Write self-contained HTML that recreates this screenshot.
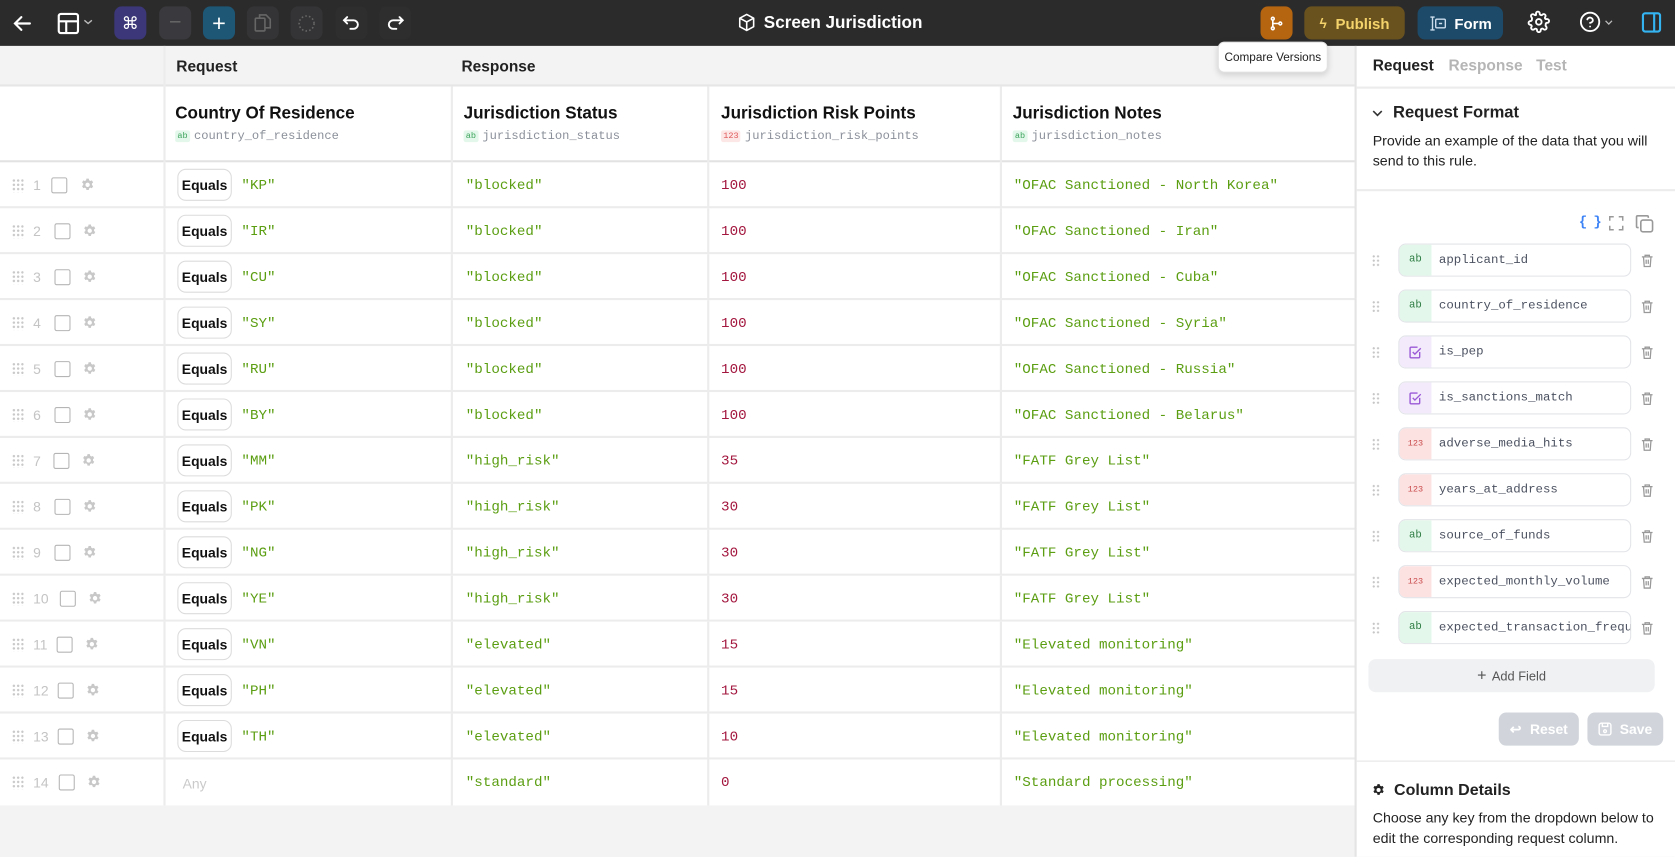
<!DOCTYPE html>
<html><head><meta charset="utf-8"><style>
*{box-sizing:border-box;margin:0;padding:0}
html,body{width:1675px;height:856px;overflow:hidden;background:#f3f3f3}
#w{position:absolute;left:0;top:0;width:1568px;height:802px;transform:scale(1.06824);transform-origin:0 0;font-family:"Liberation Sans",sans-serif;color:#111}
.a{position:absolute}
.top{left:0;top:0;width:1568px;height:43px;background:#2b2b2b}
.tb{position:absolute;top:6px;width:30px;height:31px;border-radius:7px;display:flex;align-items:center;justify-content:center}
.mono{font-family:"Liberation Mono",monospace}
.row{position:absolute;left:0;width:1268px;height:43px;background:#fff;border-bottom:2px solid #ececec}
.g{color:#5b9e12;font-size:13.3px}
.r{color:#a3173f;font-size:13.3px}
.eq{position:absolute;left:166px;top:6px;width:51px;height:30px;border:1px solid #dcdcdc;border-radius:8px;font-size:13px;font-weight:bold;display:flex;align-items:center;justify-content:center}
.num{position:absolute;left:31px;top:14px;font-size:13px;color:#c4c4c4}
.cb{position:absolute;top:14px;width:15px;height:15px;border:1.5px solid #b5b5b5;border-radius:2px}
.dots{position:absolute;left:11px;top:15px;width:11px;height:13px;background-image:radial-gradient(circle,#c9c9c9 1px,transparent 1.2px);background-size:4px 4px}
.gear{position:absolute;top:14px;width:14px;height:14px}
.cell{position:absolute;top:14px}
.vl{position:absolute;top:0;width:2px;height:43px;background:#ececec}
.hd{position:absolute;top:98px;font-size:16px;font-weight:bold}
.sub{position:absolute;top:122px;font-size:11.3px;color:#8a8f99}
.bd{display:inline-block;font-size:8px;padding:1px 2px;border-radius:2px;margin-right:4px;vertical-align:1px}
.fld{position:absolute;left:1309px;width:218px;height:31px;border:1px solid #e2e4e8;border-radius:7px;background:#fff;overflow:hidden}
.fb{position:absolute;left:0;top:0;width:30px;height:29px;display:flex;align-items:center;justify-content:center;font-size:10px}
.ft{position:absolute;left:37px;top:8px;font-size:11.6px;color:#4b5160;white-space:nowrap}
.fd{position:absolute;left:1284px;width:8px;height:12px;background-image:radial-gradient(circle,#c5c5c5 0.9px,transparent 1.1px);background-size:4px 4px}
.tr{position:absolute;left:1535px;width:14px;height:14px}
</style></head><body><div id="w">
<div class="a top"></div>
<svg class="a" style="left:11px;top:12px" width="20" height="20" viewBox="0 0 20 20" fill="none" stroke="#fff" stroke-width="2" stroke-linecap="round"><path d="M17 10H3M9 4L3 10l6 6"/></svg>
<svg class="a" style="left:53px;top:11px" width="22" height="22" viewBox="0 0 22 22" fill="none" stroke="#fff" stroke-width="2"><rect x="2" y="2" width="18" height="18" rx="2"/><path d="M2 9h18M9 9v11"/></svg>
<svg class="a" style="left:78px;top:17px" width="9" height="7" viewBox="0 0 9 7" fill="none" stroke="#bbb" stroke-width="1.3"><path d="M1 2l3.5 3L8 2"/></svg>
<div class="tb" style="left:107px;background:#3b3778;color:#fff;font-size:16px">⌘</div>
<div class="tb" style="left:149px;background:#3a3a3e;color:#666;font-size:20px">−</div>
<div class="tb" style="left:190px;background:#1d5775;color:#fff;font-size:22px">+</div>
<div class="tb" style="left:231px;background:#343436"><svg width="16" height="18" viewBox="0 0 16 18" fill="none" stroke="#666" stroke-width="1.5"><rect x="1" y="4" width="9" height="12" rx="1"/><path d="M5 4V1h6l4 4v8h-5"/></svg></div>
<div class="tb" style="left:272px;background:#343436"><svg width="18" height="18" viewBox="0 0 18 18" fill="none" stroke="#666" stroke-width="1.5" stroke-dasharray="1.5 2"><circle cx="9" cy="9" r="7"/></svg></div>
<div class="tb" style="left:314px;background:#2e2e2e"><svg width="18" height="16" viewBox="0 0 18 16" fill="none" stroke="#fff" stroke-width="1.8" stroke-linecap="round"><path d="M5 2L2 5l3 3M2 5h9a4 4 0 010 8H8"/></svg></div>
<div class="tb" style="left:355px;background:#2e2e2e"><svg width="18" height="16" viewBox="0 0 18 16" fill="none" stroke="#fff" stroke-width="1.8" stroke-linecap="round"><path d="M13 2l3 3-3 3M16 5H7a4 4 0 000 8h3"/></svg></div>
<svg class="a" style="left:690px;top:12px" width="18" height="18" viewBox="0 0 18 18" fill="none" stroke="#fff" stroke-width="1.5" stroke-linejoin="round"><path d="M9 1.5l6.5 3.5v8L9 16.5 2.5 13V5z M2.5 5L9 8.5 15.5 5M9 8.5v8"/></svg>
<div class="a" style="left:715px;top:13px;color:#fff;font-size:16px;font-weight:bold">Screen Jurisdiction</div>
<div class="tb" style="left:1180px;background:#b5640f"><svg width="14" height="14" viewBox="0 0 14 14" fill="none" stroke="#fff" stroke-width="1.5"><circle cx="3.5" cy="2.5" r="1.3"/><circle cx="3.5" cy="11.5" r="1.3"/><circle cx="10.5" cy="7" r="1.3"/><path d="M3.5 4v6M3.5 7h5.5"/></svg></div>
<div class="tb" style="left:1221px;width:94px;background:#6a521f;color:#f4d36b;font-size:14px;font-weight:bold"><span style="font-size:13px;margin-right:8px">ϟ</span>Publish</div>
<div class="tb" style="left:1327px;width:80px;background:#1c4a68;color:#fff;font-size:14px;font-weight:bold"><svg width="16" height="14" viewBox="0 0 16 14" fill="none" stroke="#cde" stroke-width="1.3" style="margin-right:8px"><path d="M3 1v12M1 1h4M1 13h4"/><rect x="6" y="3" width="9" height="8" rx="1"/><path d="M9 7h3"/></svg>Form</div>
<svg class="a" style="left:1430px;top:10px" width="21" height="21" viewBox="0 0 24 24" fill="none" stroke="#fff" stroke-width="2"><circle cx="12" cy="12" r="3"/><path d="M19.4 15a1.65 1.65 0 00.33 1.820l.06.06a2 2 0 11-2.83 2.830l-.06-.06a1.65 1.65 0 00-2.82 1.170V21a2 2 0 01-4 0v-.09a1.65 1.65 0 00-2.82-1.170l-.06.06a2 2 0 11-2.83-2.830l.06-.06A1.65 1.65 0 003 15.1H3a2 2 0 010-4h.09A1.65 1.65 0 004.6 9a1.65 1.65 0 00-.33-1.820l-.06-.06a2 2 0 112.83-2.830l.06.06A1.65 1.65 0 009 4.6V3a2 2 0 014 0v.09a1.65 1.65 0 002.82 1.170l.06-.06a2 2 0 112.83 2.830l-.06.06A1.65 1.65 0 0019.4 9H21a2 2 0 010 4h-.09a1.65 1.65 0 00-1.51 1z"/></svg>
<svg class="a" style="left:1478px;top:10px" width="21" height="21" viewBox="0 0 22 22" fill="none" stroke="#fff" stroke-width="1.8" stroke-linecap="round"><circle cx="11" cy="11" r="9"/><path d="M8.3 8.5a2.8 2.8 0 015.4 1c0 1.8-2.7 2.5-2.7 2.5M11 15.5h.01"/></svg>
<svg class="a" style="left:1502px;top:18px" width="8" height="6" viewBox="0 0 8 6" fill="none" stroke="#bbb" stroke-width="1.2"><path d="M1 1.5l3 3 3-3"/></svg>
<svg class="a" style="left:1536px;top:11px" width="20" height="20" viewBox="0 0 20 20" fill="none" stroke="#35b4f2" stroke-width="2"><rect x="2" y="1.5" width="16" height="17" rx="2"/><path d="M12.5 1.5v17"/></svg>

<div class="a" style="left:0;top:43px;width:1268px;height:38px;background:#f3f3f3;border-bottom:2px solid #e6e6e6"></div>
<div class="a" style="left:153px;top:43px;width:2px;height:711px;background:#ececec"></div>
<div class="a" style="left:165px;top:55px;font-size:14.5px;font-weight:bold;color:#222">Request</div>
<div class="a" style="left:432px;top:55px;font-size:14.5px;font-weight:bold;color:#222">Response</div>
<div class="a" style="left:0;top:81px;width:1268px;height:71px;background:#fff;border-bottom:2px solid #e2e2e2"></div>
<div class="a" style="left:153px;top:81px;width:2px;height:71px;background:#ececec"></div>
<div class="a" style="left:422px;top:81px;width:2px;height:71px;background:#ececec"></div>
<div class="a" style="left:662px;top:81px;width:2px;height:71px;background:#ececec"></div>
<div class="a" style="left:936px;top:81px;width:2px;height:71px;background:#ececec"></div>
<div class="hd" style="left:164px">Country Of Residence</div>
<div class="hd" style="left:434px">Jurisdiction Status</div>
<div class="hd" style="left:675px">Jurisdiction Risk Points</div>
<div class="hd" style="left:948px">Jurisdiction Notes</div>
<div class="sub mono" style="left:164px"><span class="bd" style="background:#e3f8ea;color:#3ca35c">ab</span>country_of_residence</div>
<div class="sub mono" style="left:434px"><span class="bd" style="background:#e3f8ea;color:#3ca35c">ab</span>jurisdiction_status</div>
<div class="sub mono" style="left:675px"><span class="bd" style="background:#fde6e6;color:#e05a5a">123</span>jurisdiction_risk_points</div>
<div class="sub mono" style="left:948px"><span class="bd" style="background:#e3f8ea;color:#3ca35c">ab</span>jurisdiction_notes</div>

<svg width="0" height="0" style="position:absolute"><defs><symbol id="gr" viewBox="0 0 24 24"><path fill="#c8c8c8" d="M13.9 2l.5 2.6a8 8 0 012 1.2l2.5-.9 2 3.4-2 1.7a8 8 0 010 2.4l2 1.7-2 3.4-2.5-.9a8 8 0 01-2 1.2l-.5 2.6h-3.8l-.5-2.6a8 8 0 01-2-1.2l-2.5.9-2-3.4 2-1.7a8 8 0 010-2.4l-2-1.7 2-3.4 2.5.9a8 8 0 012-1.2l.5-2.6zM12 8.5a3.5 3.5 0 100 7 3.5 3.5 0 000-7z"/></symbol></defs></svg>

<div class="row" style="top:152px"><div class="dots"></div><div class="num">1</div><div class="cb" style="left:48px"></div><svg class="gear" style="left:75px"><use href="#gr"/></svg><div class="vl" style="left:153px"></div><div class="vl" style="left:422px"></div><div class="vl" style="left:662px"></div><div class="vl" style="left:936px"></div><div class="eq">Equals</div><div class="cell mono g" style="left:226px">"KP"</div><div class="cell mono g" style="left:436px">"blocked"</div><div class="cell mono r" style="left:675px">100</div><div class="cell mono g" style="left:949px">"OFAC Sanctioned - North Korea"</div></div>
<div class="row" style="top:195px"><div class="dots"></div><div class="num">2</div><div class="cb" style="left:51px"></div><svg class="gear" style="left:77px"><use href="#gr"/></svg><div class="vl" style="left:153px"></div><div class="vl" style="left:422px"></div><div class="vl" style="left:662px"></div><div class="vl" style="left:936px"></div><div class="eq">Equals</div><div class="cell mono g" style="left:226px">"IR"</div><div class="cell mono g" style="left:436px">"blocked"</div><div class="cell mono r" style="left:675px">100</div><div class="cell mono g" style="left:949px">"OFAC Sanctioned - Iran"</div></div>
<div class="row" style="top:238px"><div class="dots"></div><div class="num">3</div><div class="cb" style="left:51px"></div><svg class="gear" style="left:77px"><use href="#gr"/></svg><div class="vl" style="left:153px"></div><div class="vl" style="left:422px"></div><div class="vl" style="left:662px"></div><div class="vl" style="left:936px"></div><div class="eq">Equals</div><div class="cell mono g" style="left:226px">"CU"</div><div class="cell mono g" style="left:436px">"blocked"</div><div class="cell mono r" style="left:675px">100</div><div class="cell mono g" style="left:949px">"OFAC Sanctioned - Cuba"</div></div>
<div class="row" style="top:281px"><div class="dots"></div><div class="num">4</div><div class="cb" style="left:51px"></div><svg class="gear" style="left:77px"><use href="#gr"/></svg><div class="vl" style="left:153px"></div><div class="vl" style="left:422px"></div><div class="vl" style="left:662px"></div><div class="vl" style="left:936px"></div><div class="eq">Equals</div><div class="cell mono g" style="left:226px">"SY"</div><div class="cell mono g" style="left:436px">"blocked"</div><div class="cell mono r" style="left:675px">100</div><div class="cell mono g" style="left:949px">"OFAC Sanctioned - Syria"</div></div>
<div class="row" style="top:324px"><div class="dots"></div><div class="num">5</div><div class="cb" style="left:51px"></div><svg class="gear" style="left:77px"><use href="#gr"/></svg><div class="vl" style="left:153px"></div><div class="vl" style="left:422px"></div><div class="vl" style="left:662px"></div><div class="vl" style="left:936px"></div><div class="eq">Equals</div><div class="cell mono g" style="left:226px">"RU"</div><div class="cell mono g" style="left:436px">"blocked"</div><div class="cell mono r" style="left:675px">100</div><div class="cell mono g" style="left:949px">"OFAC Sanctioned - Russia"</div></div>
<div class="row" style="top:367px"><div class="dots"></div><div class="num">6</div><div class="cb" style="left:51px"></div><svg class="gear" style="left:77px"><use href="#gr"/></svg><div class="vl" style="left:153px"></div><div class="vl" style="left:422px"></div><div class="vl" style="left:662px"></div><div class="vl" style="left:936px"></div><div class="eq">Equals</div><div class="cell mono g" style="left:226px">"BY"</div><div class="cell mono g" style="left:436px">"blocked"</div><div class="cell mono r" style="left:675px">100</div><div class="cell mono g" style="left:949px">"OFAC Sanctioned - Belarus"</div></div>
<div class="row" style="top:410px"><div class="dots"></div><div class="num">7</div><div class="cb" style="left:50px"></div><svg class="gear" style="left:76px"><use href="#gr"/></svg><div class="vl" style="left:153px"></div><div class="vl" style="left:422px"></div><div class="vl" style="left:662px"></div><div class="vl" style="left:936px"></div><div class="eq">Equals</div><div class="cell mono g" style="left:226px">"MM"</div><div class="cell mono g" style="left:436px">"high_risk"</div><div class="cell mono r" style="left:675px">35</div><div class="cell mono g" style="left:949px">"FATF Grey List"</div></div>
<div class="row" style="top:453px"><div class="dots"></div><div class="num">8</div><div class="cb" style="left:51px"></div><svg class="gear" style="left:77px"><use href="#gr"/></svg><div class="vl" style="left:153px"></div><div class="vl" style="left:422px"></div><div class="vl" style="left:662px"></div><div class="vl" style="left:936px"></div><div class="eq">Equals</div><div class="cell mono g" style="left:226px">"PK"</div><div class="cell mono g" style="left:436px">"high_risk"</div><div class="cell mono r" style="left:675px">30</div><div class="cell mono g" style="left:949px">"FATF Grey List"</div></div>
<div class="row" style="top:496px"><div class="dots"></div><div class="num">9</div><div class="cb" style="left:51px"></div><svg class="gear" style="left:77px"><use href="#gr"/></svg><div class="vl" style="left:153px"></div><div class="vl" style="left:422px"></div><div class="vl" style="left:662px"></div><div class="vl" style="left:936px"></div><div class="eq">Equals</div><div class="cell mono g" style="left:226px">"NG"</div><div class="cell mono g" style="left:436px">"high_risk"</div><div class="cell mono r" style="left:675px">30</div><div class="cell mono g" style="left:949px">"FATF Grey List"</div></div>
<div class="row" style="top:539px"><div class="dots"></div><div class="num">10</div><div class="cb" style="left:56px"></div><svg class="gear" style="left:82px"><use href="#gr"/></svg><div class="vl" style="left:153px"></div><div class="vl" style="left:422px"></div><div class="vl" style="left:662px"></div><div class="vl" style="left:936px"></div><div class="eq">Equals</div><div class="cell mono g" style="left:226px">"YE"</div><div class="cell mono g" style="left:436px">"high_risk"</div><div class="cell mono r" style="left:675px">30</div><div class="cell mono g" style="left:949px">"FATF Grey List"</div></div>
<div class="row" style="top:582px"><div class="dots"></div><div class="num">11</div><div class="cb" style="left:53px"></div><svg class="gear" style="left:79px"><use href="#gr"/></svg><div class="vl" style="left:153px"></div><div class="vl" style="left:422px"></div><div class="vl" style="left:662px"></div><div class="vl" style="left:936px"></div><div class="eq">Equals</div><div class="cell mono g" style="left:226px">"VN"</div><div class="cell mono g" style="left:436px">"elevated"</div><div class="cell mono r" style="left:675px">15</div><div class="cell mono g" style="left:949px">"Elevated monitoring"</div></div>
<div class="row" style="top:625px"><div class="dots"></div><div class="num">12</div><div class="cb" style="left:54px"></div><svg class="gear" style="left:80px"><use href="#gr"/></svg><div class="vl" style="left:153px"></div><div class="vl" style="left:422px"></div><div class="vl" style="left:662px"></div><div class="vl" style="left:936px"></div><div class="eq">Equals</div><div class="cell mono g" style="left:226px">"PH"</div><div class="cell mono g" style="left:436px">"elevated"</div><div class="cell mono r" style="left:675px">15</div><div class="cell mono g" style="left:949px">"Elevated monitoring"</div></div>
<div class="row" style="top:668px"><div class="dots"></div><div class="num">13</div><div class="cb" style="left:54px"></div><svg class="gear" style="left:80px"><use href="#gr"/></svg><div class="vl" style="left:153px"></div><div class="vl" style="left:422px"></div><div class="vl" style="left:662px"></div><div class="vl" style="left:936px"></div><div class="eq">Equals</div><div class="cell mono g" style="left:226px">"TH"</div><div class="cell mono g" style="left:436px">"elevated"</div><div class="cell mono r" style="left:675px">10</div><div class="cell mono g" style="left:949px">"Elevated monitoring"</div></div>
<div class="row" style="top:711px;border-bottom:none"><div class="dots"></div><div class="num">14</div><div class="cb" style="left:55px"></div><svg class="gear" style="left:81px"><use href="#gr"/></svg><div class="vl" style="left:153px"></div><div class="vl" style="left:422px"></div><div class="vl" style="left:662px"></div><div class="vl" style="left:936px"></div><div class="cell" style="left:171px;font-size:13px;color:#cacaca;top:15px">Any</div><div class="cell mono g" style="left:436px">"standard"</div><div class="cell mono r" style="left:675px">0</div><div class="cell mono g" style="left:949px">"Standard processing"</div></div>

<div class="a" style="left:1268px;top:43px;width:300px;height:759px;background:#fff;border-left:2px solid #e4e4e4"></div>
<div class="a" style="left:1285px;top:54px;font-size:14.5px;font-weight:bold;color:#222">Request</div>
<div class="a" style="left:1356px;top:54px;font-size:14.5px;font-weight:bold;color:#b5b5b5">Response</div>
<div class="a" style="left:1438px;top:54px;font-size:14.5px;font-weight:bold;color:#b5b5b5">Test</div>
<div class="a" style="left:1270px;top:81px;width:298px;height:2px;background:#ececec"></div>
<svg class="a" style="left:1284px;top:102px" width="11" height="8" viewBox="0 0 11 8" fill="none" stroke="#333" stroke-width="1.5"><path d="M1.5 2l4 4 4-4"/></svg>
<div class="a" style="left:1304px;top:97px;font-size:15.5px;font-weight:bold;color:#222">Request Format</div>
<div class="a" style="left:1285px;top:122px;font-size:13.3px;line-height:19px;color:#222;width:280px">Provide an example of the data that you will send to this rule.</div>
<div class="a" style="left:1270px;top:177px;width:298px;height:2px;background:#ececec"></div>
<div class="a mono" style="left:1478px;top:200px;font-size:13px;color:#3b82f6;font-weight:bold;letter-spacing:-1px">{ }</div>
<svg class="a" style="left:1506px;top:202px" width="14" height="14" viewBox="0 0 15 15" fill="none" stroke="#999" stroke-width="1.5"><path d="M1 5V1h4M10 1h4v4M14 10v4h-4M5 14H1v-4"/></svg>
<svg class="a" style="left:1531px;top:201px" width="17" height="17" viewBox="0 0 17 17" fill="none" stroke="#999" stroke-width="1.5"><rect x="5" y="5" width="11" height="11" rx="2"/><path d="M3 12H2a1 1 0 01-1-1V2a1 1 0 011-1h9a1 1 0 011 1v1"/></svg>

<div class="fd" style="top:238px"></div><div class="fld" style="top:228px"><div class="fb mono" style="background:#e3f8ea;color:#2f7d45">ab</div><div class="ft mono">applicant_id</div></div>
<div class="fd" style="top:281px"></div><div class="fld" style="top:271px"><div class="fb mono" style="background:#e3f8ea;color:#2f7d45">ab</div><div class="ft mono">country_of_residence</div></div>
<div class="fd" style="top:324px"></div><div class="fld" style="top:314px"><div class="fb" style="background:#f3ebfc"><svg width="12" height="12" viewBox="0 0 12 12" fill="none" stroke="#9b59d6" stroke-width="1.3"><path d="M10 5.5V10a1 1 0 01-1 1H2a1 1 0 01-1-1V2a1 1 0 011-1h6"/><path d="M3.5 5.5l2 2L11 2"/></svg></div><div class="ft mono">is_pep</div></div>
<div class="fd" style="top:367px"></div><div class="fld" style="top:357px"><div class="fb" style="background:#f3ebfc"><svg width="12" height="12" viewBox="0 0 12 12" fill="none" stroke="#9b59d6" stroke-width="1.3"><path d="M10 5.5V10a1 1 0 01-1 1H2a1 1 0 01-1-1V2a1 1 0 011-1h6"/><path d="M3.5 5.5l2 2L11 2"/></svg></div><div class="ft mono">is_sanctions_match</div></div>
<div class="fd" style="top:410px"></div><div class="fld" style="top:400px"><div class="fb mono" style="background:#fde2e2;color:#c94a4a;font-size:8px">123</div><div class="ft mono">adverse_media_hits</div></div>
<div class="fd" style="top:453px"></div><div class="fld" style="top:443px"><div class="fb mono" style="background:#fde2e2;color:#c94a4a;font-size:8px">123</div><div class="ft mono">years_at_address</div></div>
<div class="fd" style="top:496px"></div><div class="fld" style="top:486px"><div class="fb mono" style="background:#e3f8ea;color:#2f7d45">ab</div><div class="ft mono">source_of_funds</div></div>
<div class="fd" style="top:539px"></div><div class="fld" style="top:529px"><div class="fb mono" style="background:#fde2e2;color:#c94a4a;font-size:8px">123</div><div class="ft mono">expected_monthly_volume</div></div>
<div class="fd" style="top:582px"></div><div class="fld" style="top:572px"><div class="fb mono" style="background:#e3f8ea;color:#2f7d45">ab</div><div class="ft mono">expected_transaction_frequ</div></div>
<svg class="tr" style="top:237px" viewBox="0 0 14 14" fill="none" stroke="#999" stroke-width="1.2"><path d="M2 3.5h10M5 3.5V2h4v1.5M3.5 3.5l.7 9h5.6l.7-9M6 6v4M8 6v4"/></svg>
<svg class="tr" style="top:280px" viewBox="0 0 14 14" fill="none" stroke="#999" stroke-width="1.2"><path d="M2 3.5h10M5 3.5V2h4v1.5M3.5 3.5l.7 9h5.6l.7-9M6 6v4M8 6v4"/></svg>
<svg class="tr" style="top:323px" viewBox="0 0 14 14" fill="none" stroke="#999" stroke-width="1.2"><path d="M2 3.5h10M5 3.5V2h4v1.5M3.5 3.5l.7 9h5.6l.7-9M6 6v4M8 6v4"/></svg>
<svg class="tr" style="top:366px" viewBox="0 0 14 14" fill="none" stroke="#999" stroke-width="1.2"><path d="M2 3.5h10M5 3.5V2h4v1.5M3.5 3.5l.7 9h5.6l.7-9M6 6v4M8 6v4"/></svg>
<svg class="tr" style="top:409px" viewBox="0 0 14 14" fill="none" stroke="#999" stroke-width="1.2"><path d="M2 3.5h10M5 3.5V2h4v1.5M3.5 3.5l.7 9h5.6l.7-9M6 6v4M8 6v4"/></svg>
<svg class="tr" style="top:452px" viewBox="0 0 14 14" fill="none" stroke="#999" stroke-width="1.2"><path d="M2 3.5h10M5 3.5V2h4v1.5M3.5 3.5l.7 9h5.6l.7-9M6 6v4M8 6v4"/></svg>
<svg class="tr" style="top:495px" viewBox="0 0 14 14" fill="none" stroke="#999" stroke-width="1.2"><path d="M2 3.5h10M5 3.5V2h4v1.5M3.5 3.5l.7 9h5.6l.7-9M6 6v4M8 6v4"/></svg>
<svg class="tr" style="top:538px" viewBox="0 0 14 14" fill="none" stroke="#999" stroke-width="1.2"><path d="M2 3.5h10M5 3.5V2h4v1.5M3.5 3.5l.7 9h5.6l.7-9M6 6v4M8 6v4"/></svg>
<svg class="tr" style="top:581px" viewBox="0 0 14 14" fill="none" stroke="#999" stroke-width="1.2"><path d="M2 3.5h10M5 3.5V2h4v1.5M3.5 3.5l.7 9h5.6l.7-9M6 6v4M8 6v4"/></svg>

<div class="a" style="left:1281px;top:617px;width:268px;height:31px;background:#f0f1f3;border-radius:7px;font-size:12px;color:#555;display:flex;align-items:center;justify-content:center"><span style="font-size:15px;margin-right:5px">+</span>Add Field</div>
<div class="a" style="left:1403px;top:667px;width:75px;height:31px;background:#d1d5db;border-radius:7px;color:#fff;font-size:13px;font-weight:bold;display:flex;align-items:center;justify-content:center"><span style="margin-right:8px">↩</span>Reset</div>
<div class="a" style="left:1486px;top:667px;width:71px;height:31px;background:#d1d5db;border-radius:7px;color:#fff;font-size:13px;font-weight:bold;display:flex;align-items:center;justify-content:center"><svg width="13" height="13" viewBox="0 0 13 13" fill="none" stroke="#fff" stroke-width="1.3" style="margin-right:7px"><rect x="1" y="1" width="11" height="11" rx="2"/><path d="M4 1v3h5V1"/><circle cx="6.5" cy="8.5" r="1.3"/></svg>Save</div>
<div class="a" style="left:1270px;top:712px;width:298px;height:1px;background:#e6e6e6"></div>
<svg class="a" style="left:1284px;top:733px" width="13" height="13" viewBox="0 0 24 24"><path fill="#222" d="M13.9 2l.5 2.6a8 8 0 012 1.2l2.5-.9 2 3.4-2 1.7a8 8 0 010 2.4l2 1.7-2 3.4-2.5-.9a8 8 0 01-2 1.2l-.5 2.6h-3.8l-.5-2.6a8 8 0 01-2-1.2l-2.5.9-2-3.4 2-1.7a8 8 0 010-2.4l-2-1.7 2-3.4 2.5.9a8 8 0 012-1.2l.5-2.6zM12 8.5a3.5 3.5 0 100 7 3.5 3.5 0 000-7z"/></svg>
<div class="a" style="left:1305px;top:731px;font-size:15px;font-weight:bold;color:#222">Column Details</div>
<div class="a" style="left:1285px;top:756px;font-size:13.3px;line-height:19px;color:#222;width:280px">Choose any key from the dropdown below to edit the corresponding request column.</div>

<div class="a" style="left:1140px;top:39px;width:103px;height:29px;background:#fff;border:1px solid #e2e2e2;border-radius:6px;box-shadow:0 2px 6px rgba(0,0,0,.15);font-size:11px;color:#222;display:flex;align-items:center;justify-content:center">Compare Versions</div>
</div></body></html>
